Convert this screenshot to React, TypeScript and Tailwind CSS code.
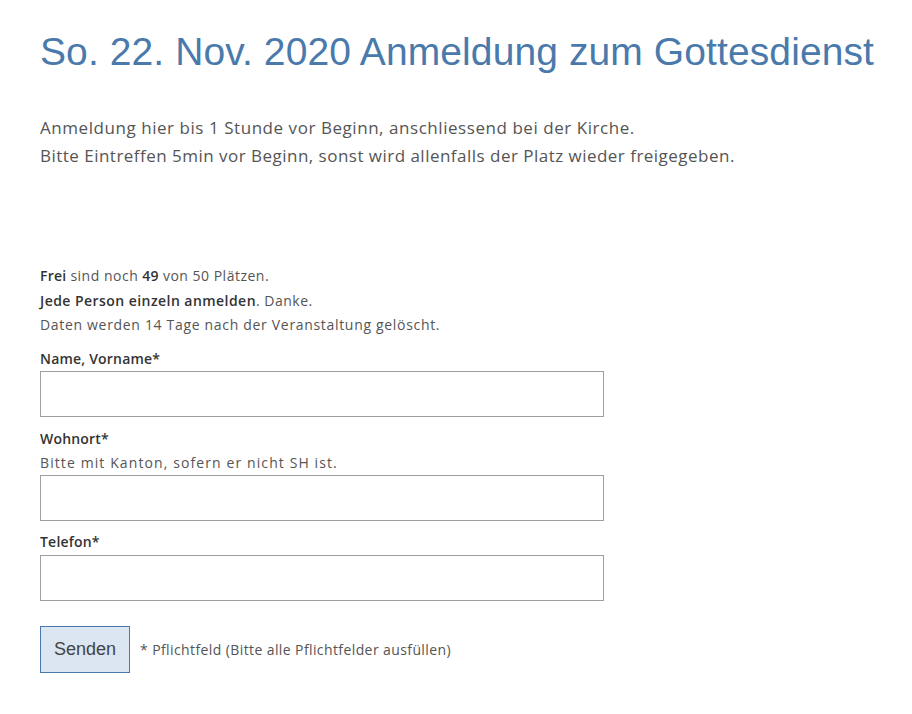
import React from "react";

export default function App() {
  const font = { fontFamily: '"Open Sans", "Noto Sans", sans-serif' };
  return (
    <div className="min-h-[714px] w-[912px] bg-white text-[#555]" style={font}>
      <div className="pl-[40px] pt-[27px]">
        <h1 className="text-[39px] leading-[50px] text-[#4a7aab] font-normal tracking-[0.1px]" style={{ fontFamily: '"Liberation Sans", Arial, sans-serif' }}>
          So. 22. Nov. 2020 Anmeldung zum Gottesdienst
        </h1>
        <div className="mt-[37px] text-[17px] leading-[28px] tracking-[0.55px] text-[#555]">
          <p>Anmeldung hier bis 1 Stunde vor Beginn, anschliessend bei der Kirche.</p>
          <p className="tracking-[0.48px]">Bitte Eintreffen 5min vor Beginn, sonst wird allenfalls der Platz wieder freigegeben.</p>
        </div>
        <div className="mt-[94px] text-[14px] leading-[24.5px] tracking-[0.5px] text-[#555]">
          <p><span className="font-semibold text-[#333] tracking-[0.2px]">Frei</span> sind noch <span className="font-semibold text-[#333] tracking-[0.2px]">49</span> von 50 Plätzen.</p>
          <p><span className="font-semibold text-[#333] tracking-[0.45px]">Jede Person einzeln anmelden</span>. Danke.</p>
          <p className="tracking-[0.68px]">Daten werden 14 Tage nach der Veranstaltung gelöscht.</p>
        </div>
        <form className="mt-[9px] w-[564px]">
          <label className="block text-[14px] leading-[24px] font-semibold text-[#333] tracking-[0.2px]">Name, Vorname*</label>
          <input className="block h-[46px] w-[564px] border border-[#a0a0a0] bg-white" />
          <label className="mt-[10px] block text-[14px] leading-[24px] font-semibold text-[#333] tracking-[0.2px]">Wohnort*</label>
          <p className="text-[14px] leading-[24px] tracking-[1.1px]">Bitte mit Kanton, sofern er nicht SH ist.</p>
          <input className="block h-[46px] w-[564px] border border-[#a0a0a0] bg-white" />
          <label className="mt-[9px] block text-[14px] leading-[24px] font-semibold text-[#333] tracking-[0.2px]">Telefon*</label>
          <input className="mt-[1px] block h-[46px] w-[564px] border border-[#a0a0a0] bg-white" />
          <div className="mt-[25px] flex items-center gap-[10px]">
            <button type="button" className="h-[47px] w-[90px] border border-[#4a7aab] bg-[#dce6f2] text-[18px] text-[#444]" style={{ fontFamily: '"Liberation Sans", Arial, sans-serif' }}>
              Senden
            </button>
            <span className="text-[14px] tracking-[0.4px]">* Pflichtfeld (Bitte alle Pflichtfelder ausfüllen)</span>
          </div>
        </form>
      </div>
    </div>
  );
}
